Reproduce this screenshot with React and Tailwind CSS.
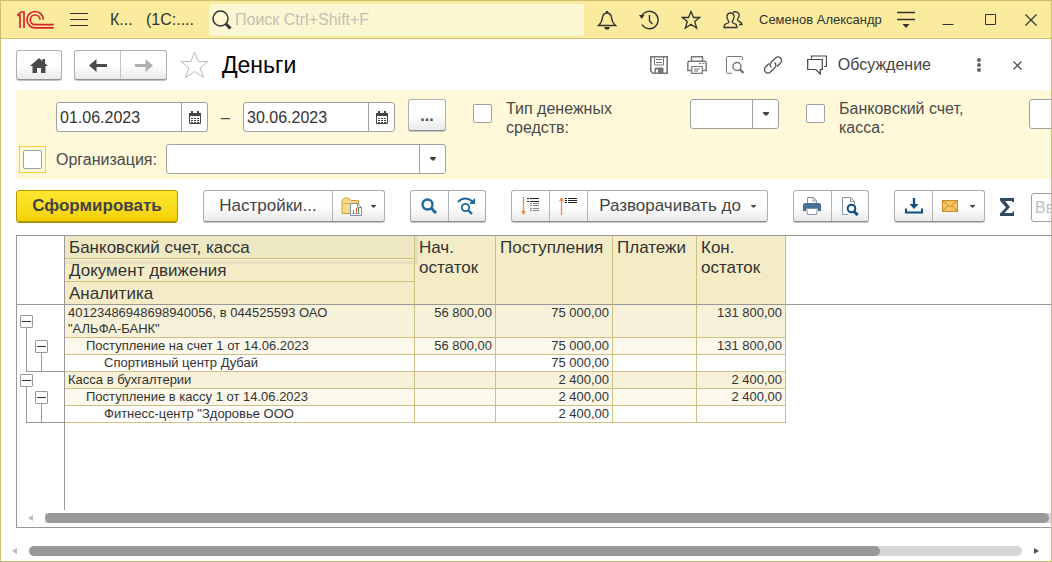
import { clsx } from "clsx";

const rows = [
  {
    level: 0,
    title: '40123486948698940056, в 044525593 ОАО "АЛЬФА-БАНК"',
    values: ["56 800,00", "75 000,00", "", "131 800,00"],
  },
  {
    level: 1,
    title: "Поступление на счет 1 от 14.06.2023",
    values: ["56 800,00", "75 000,00", "", "131 800,00"],
  },
  {
    level: 2,
    title: "Спортивный центр Дубай",
    values: ["", "75 000,00", "", ""],
  },
  {
    level: 0,
    title: "Касса в бухгалтерии",
    values: ["", "2 400,00", "", "2 400,00"],
  },
  {
    level: 1,
    title: "Поступление в кассу 1 от 14.06.2023",
    values: ["", "2 400,00", "", "2 400,00"],
  },
  {
    level: 2,
    title: 'Фитнесс-центр "Здоровье ООО',
    values: ["", "2 400,00", "", ""],
  },
];

const levelColors = ["bg-[#f7f1da]", "bg-[#fcf9ec]", "bg-white"];
const levelIndents = ["pl-[3px]", "pl-[21px]", "pl-[39px]"];

const buttonLook =
  "border border-[#b0b0b0] border-b-[#8f8f8f] rounded-[3px] bg-gradient-to-b from-white from-50% to-[#e9e9e9] shadow-[0_1px_0_#c4c4c4]";

function Svg({ w, h, children, className }) {
  return (
    <svg
      width={w}
      height={h}
      viewBox={`0 0 ${w} ${h}`}
      fill="none"
      stroke="currentColor"
      className={clsx("shrink-0", className)}
      aria-hidden="true"
    >
      {children}
    </svg>
  );
}

function Caret() {
  return (
    <Svg w={6} h={4}>
      <path d="M0 0h6v1L4 3.500H2L0 1z" fill="#444" stroke="none" />
    </Svg>
  );
}

function SmallCaret() {
  return (
    <Svg w={5} h={3}>
      <path d="M0 0h5v.5L2.500 3L0 .5z" fill="#444" stroke="none" />
    </Svg>
  );
}

function Logo() {
  return (
    <svg
      width="37"
      height="19"
      viewBox="0 0 111 57"
      fill="none"
      stroke="#d9232b"
      strokeWidth="5"
      className="shrink-0"
      role="img"
      aria-label="1С"
    >
      <path d="M1 16h8v38M1 16L12 6h9v48" />
      <path d="M79 29A24.500 24.500 0 1 0 55 53.500H110" />
      <path d="M69 29A14.500 14.500 0 1 0 55 44H110" />
    </svg>
  );
}

function TitleButton({ label, children, className = "w-[42px]" }) {
  return (
    <button
      type="button"
      aria-label={label}
      className={clsx("flex h-full shrink-0 items-center justify-center", className)}
    >
      {children}
    </button>
  );
}

function TitleBar() {
  return (
    <header className="flex h-[38px] shrink-0 items-center border-b border-[#cdbd6c] bg-[#faeb9e] text-[#333]">
      <div className="flex w-[208px] shrink-0 items-center pl-4">
        <Logo />
        <button type="button" aria-label="Главное меню" className="ml-4">
          <Svg w={18} h={15}>
            <path d="M0 1.500h18M0 7.500h18M0 13.500h18" />
          </Svg>
        </button>
        <span className="ml-[22px] w-9 text-[16px]">К...</span>
        <span className="text-[16px]">(1С:....</span>
      </div>

      <label className="flex h-8 min-w-0 flex-1 items-center rounded-[3px] bg-[#fdf6d2] pl-[3px]">
        <Svg w={20} h={20}>
          <circle cx="8.500" cy="8.500" r="7.500" strokeWidth="1.500" />
          <path d="M14 14l4.500 4.500" strokeWidth="3" />
        </Svg>
        <input
          type="text"
          aria-label="Поиск"
          placeholder="Поиск Ctrl+Shift+F"
          className="ml-[3px] min-w-0 flex-1 bg-transparent text-[16px] outline-none placeholder:text-[#c3c0b6]"
        />
      </label>

      <nav className="ml-[2px] flex h-full shrink-0 items-center">
        <TitleButton label="Уведомления">
          <Svg w={20} h={20}>
            <path
              d="M1.500 15.500h17c-3-2.500-3.500-4-4-8C14 4.500 12.500 3 10 3S6 4.500 5.500 7.500c-.5 4-1 5.500-4 8z"
              strokeWidth="1.400"
            />
            <path d="M10 1v2" strokeWidth="2" />
            <path d="M7 17h6l-1.500 2.500h-3z" fill="currentColor" stroke="none" />
          </Svg>
        </TitleButton>
        <TitleButton label="История">
          <Svg w={20} h={20}>
            <path d="M2.500 6.500A8.700 8.700 0 1 1 3 14.500" strokeWidth="1.400" />
            <path d="M0 5h5.500L2.700 9z" fill="currentColor" stroke="none" />
            <path d="M10.500 5v6l3 3" strokeWidth="1.400" />
          </Svg>
        </TitleButton>
        <TitleButton label="Избранное">
          <Svg w={20} h={20}>
            <path
              d="M10 1.500l2.500 6h6.200l-5 4 2 6.700-5.700-4-5.700 4 2-6.700-5-4h6.200z"
              strokeWidth="1.300"
            />
          </Svg>
        </TitleButton>
        <TitleButton label="Пользователи">
          <Svg w={20} h={18}>
            <path
              d="M1 16.500c0-3 1-3.500 4-4.500 1-.5 1-1.500.3-2.300C4 8 3.700 6.500 4 5c.3-2 1.500-3 3.500-3s3.200 1 3.500 3c.3 1.500 0 3-1.300 4.700-.7.800-.7 1.800.3 2.300 3 1 4 1.500 4 4.500z"
              strokeWidth="1.300"
            />
            <path
              d="M10 1.500c1-1 4.500-1.200 5.700 1 .8 1.500.3 3.500-.7 5-.8 1.200-.7 2 .3 2.500 2.500 1 3.700 1.500 3.700 3.500h-3"
              strokeWidth="1.300"
            />
          </Svg>
        </TitleButton>
        <button type="button" className="w-[131px] pl-[5px] text-left text-[13px] whitespace-nowrap">
          Семенов Александр
        </button>
        <TitleButton label="Сервис и настройки">
          <Svg w={18} h={17}>
            <path d="M0 1.500h18M0 8.500h18" strokeWidth="1.300" />
            <path d="M5.500 13h7L9 17z" fill="currentColor" stroke="none" />
          </Svg>
        </TitleButton>
        <TitleButton label="Свернуть">
          <Svg w={12} h={12}>
            <path d="M0.500 10.500h11" />
          </Svg>
        </TitleButton>
        <TitleButton label="Развернуть">
          <Svg w={11} h={11}>
            <path d="M0.500 0.500h10v10h-10z" />
          </Svg>
        </TitleButton>
        <TitleButton label="Закрыть" className="w-10">
          <Svg w={12} h={12}>
            <path d="M0.500 0.500l11 11M11.500 0.500l-11 11" strokeWidth="1.200" />
          </Svg>
        </TitleButton>
      </nav>
    </header>
  );
}

function PageHead() {
  return (
    <div className="mt-2.5 flex h-8 shrink-0 items-center pl-[15px] text-[#4a4a4a]">
      <button
        type="button"
        aria-label="Домой"
        className={clsx(buttonLook, "flex h-[30px] w-[46px] items-center justify-center")}
      >
        <Svg w={18} h={15}>
          <path
            d="M9 0L0 8h2.500v7H7v-5h4v5h4.500V8H18l-3-2.700V1h-2.500v2z"
            fill="currentColor"
            stroke="none"
          />
        </Svg>
      </button>
      <div className={clsx(buttonLook, "ml-3 flex h-[30px] w-[93px]")}>
        <button
          type="button"
          aria-label="Назад"
          className="flex flex-1 items-center justify-center border-r border-[#c4c4c4]"
        >
          <Svg w={18} h={13}>
            <path d="M0 6.500L7.500 0v5H18v3H7.500v5z" fill="currentColor" stroke="none" />
          </Svg>
        </button>
        <button
          type="button"
          aria-label="Вперед"
          className="flex flex-1 items-center justify-center text-[#b0b0b0]"
        >
          <Svg w={18} h={13}>
            <path d="M18 6.500L10.500 0v5H0v3h10.500v5z" fill="currentColor" stroke="none" />
          </Svg>
        </button>
      </div>
      <button type="button" aria-label="В избранное" className="ml-3 text-[#b3bcc6]">
        <Svg w={31} h={28}>
          <path d="M15.500 1l3.600 9.500h10l-8 6.300 3.300 9.700-8.900-6-8.900 6 3.300-9.700-8-6.300h10z" />
        </Svg>
      </button>
      <h1 className="ml-3 flex-1 text-[23px] leading-7 text-black">Деньги</h1>

      <div className="flex shrink-0 items-center text-[#777]">
        <button type="button" aria-label="Сохранить">
          <Svg w={18} h={18}>
            <path d="M.8.8h16.400v16.400H3L.8 15z" strokeWidth="1.600" />
            <path d="M4.500 1v8h9V1M6 3.500h6M6 6.500h6" />
            <path d="M5 12h8v5H5z" fill="currentColor" />
            <path d="M7 13.500v3" stroke="white" strokeWidth="2" />
          </Svg>
        </button>
        <button type="button" aria-label="Печать" className="ml-[19px]">
          <Svg w={20} h={18}>
            <path
              d="M4.500 5V.7h11V5M4.500 14.500H.8V7c0-1 .7-1.700 1.700-1.700h15c1 0 1.700.7 1.700 1.700v7.500h-3.700"
              strokeWidth="1.400"
            />
            <path d="M4.700 10.500h10.600v6.800H4.700zM7 13h6M7 15h4M12 7.500h2M15.500 7.500h2" strokeWidth="1.200" />
          </Svg>
        </button>
        <button type="button" aria-label="Предварительный просмотр" className="ml-[19px]">
          <Svg w={18} h={18}>
            <path d="M6 17.300H1.500a1 1 0 0 1-1-1V1.500a1 1 0 0 1 1-1h14a1 1 0 0 1 1 1V4" />
            <circle cx="11" cy="10.500" r="4" strokeWidth="1.500" />
            <path d="M14 13.500l3.500 3.500" strokeWidth="2.400" />
          </Svg>
        </button>
        <button type="button" aria-label="Получить ссылку" className="ml-[19px] text-[#555]">
          <Svg w={20} h={20}>
            <path
              d="M8.500 12.500c-1.700-1.700-1.500-4 0-5.500l4-4c1.500-1.500 3.700-1.500 5 0s1.300 3.500 0 5L14 11.500M11.500 7.500c1.700 1.700 1.500 4 0 5.500l-4 4c-1.500 1.500-3.700 1.500-5 0s-1.300-3.500 0-5L6 8.500"
              strokeWidth="1.300"
            />
          </Svg>
        </button>
        <button
          type="button"
          className="ml-6 flex items-center gap-[11px] text-[16px] text-[#444]"
        >
          <Svg w={20} h={20}>
            <path d="M4.500 3.500V1h15v10.500h-2.500" strokeWidth="1.200" />
            <path d="M.7 4.500h14.600v10h-2V19l-4.500-4.500H.7z" strokeWidth="1.200" />
          </Svg>
          Обсуждение
        </button>
        <button
          type="button"
          aria-label="Ещё"
          className="ml-10 flex w-4 justify-center text-[#666]"
        >
          <Svg w={4} h={14}>
            <circle cx="2" cy="2" r="2" fill="currentColor" stroke="none" />
            <circle cx="2" cy="7" r="2" fill="currentColor" stroke="none" />
            <circle cx="2" cy="12" r="2" fill="currentColor" stroke="none" />
          </Svg>
        </button>
        <button type="button" aria-label="Закрыть страницу" className="mr-[29px] ml-[26px] text-[#555]">
          <Svg w={9} h={9}>
            <path d="M.5.500l8 8M8.500.500l-8 8" strokeWidth="1.400" />
          </Svg>
        </button>
      </div>
    </div>
  );
}

function DateField({ label, value }) {
  return (
    <div className="flex h-[30px] w-[152px] shrink-0 rounded-[3px] border border-[#a0a0a0] bg-white">
      <input
        type="text"
        aria-label={label}
        defaultValue={value}
        className="w-[125px] min-w-0 border-r border-[#a0a0a0] pl-[3px] text-[16px] text-[#333] outline-none"
      />
      <button
        type="button"
        aria-label="Выбрать дату"
        className="flex flex-1 items-center justify-center text-[#444]"
      >
        <Svg w={12} h={13}>
          <path d="M.5 3.500h11v9H.5z" />
          <path d="M0 2h12v3H0zM2 0h2v2H2zM8 0h2v2H8z" fill="currentColor" stroke="none" />
          <path d="M2 7.500h8M2 9.500h8M2 11.500h8" strokeDasharray="2 1" />
        </Svg>
      </button>
    </div>
  );
}

function ComboField({ label, className }) {
  return (
    <div
      className={clsx(
        "flex h-[30px] shrink-0 rounded-[3px] border border-[#a0a0a0] bg-white",
        className
      )}
    >
      <input type="text" aria-label={label} className="min-w-0 flex-1 outline-none" />
      <button
        type="button"
        aria-label="Открыть список"
        className="flex w-[26px] items-center justify-center border-l border-[#a0a0a0]"
      >
        <Caret />
      </button>
    </div>
  );
}

function Check({ id }) {
  return (
    <input
      id={id}
      type="checkbox"
      className="size-[19px] shrink-0 appearance-none rounded-[2px] border border-[#a0a0a0] bg-white checked:bg-[#ffdd00]"
    />
  );
}

function Filters() {
  return (
    <section className="mt-[9px] ml-[15px] h-[89px] shrink-0 overflow-hidden bg-[#fff9da] text-[16px] leading-[19px] text-[#4a4a4a]">
      <div className="flex items-start pt-[9px] pl-10">
        <div className="flex shrink-0 items-center pt-[3px]">
          <DateField label="Начало периода" value="01.06.2023" />
          <span className="w-[35px] text-center">–</span>
          <DateField label="Конец периода" value="30.06.2023" />
        </div>
        <button
          type="button"
          className={clsx(buttonLook, "ml-[13px] h-8 w-[38px] shrink-0 font-bold")}
        >
          ...
        </button>
        <div className="ml-[27px] flex shrink-0 pt-[5px]">
          <Check id="cash-type" />
        </div>
        <label htmlFor="cash-type" className="ml-3.5 w-[184px] shrink-0 pr-12">
          Тип денежных средств:
        </label>
        <ComboField label="Тип денежных средств" className="w-[89px]" />
        <div className="ml-[27px] flex shrink-0 pt-[5px]">
          <Check id="account" />
        </div>
        <label htmlFor="account" className="ml-3.5 w-[190px] shrink-0 pr-10">
          Банковский счет, касса:
        </label>
        <ComboField label="Банковский счет, касса" className="w-[280px]" />
      </div>
      <div className="mt-[7px] flex items-center pl-[3px]">
        <span className="flex size-[27px] shrink-0 items-center justify-center border border-[#ffcc33]">
          <Check id="organization" />
        </span>
        <label htmlFor="organization" className="ml-2.5 w-[110px] shrink-0">
          Организация:
        </label>
        <ComboField label="Организация" className="w-[280px]" />
      </div>
    </section>
  );
}

function Group({ children, className }) {
  return (
    <div
      className={clsx(
        buttonLook,
        "flex h-8 shrink-0 divide-x divide-[#b4b4b4]",
        className
      )}
    >
      {children}
    </div>
  );
}

function Tool({ label, children, className }) {
  return (
    <button
      type="button"
      aria-label={label}
      className={clsx("flex items-center justify-center whitespace-nowrap", className)}
    >
      {children}
    </button>
  );
}

function Toolbar() {
  return (
    <div className="mt-[11px] ml-[15px] flex h-[33px] shrink-0 items-start overflow-hidden text-[17px] text-[#444]">
      <button
        type="button"
        className="h-8 w-[162px] shrink-0 rounded-[3px] border border-[#b09a00] bg-gradient-to-b from-[#ffe72e] to-[#f3d200] font-bold shadow-[0_1px_0_#a89300]"
      >
        Сформировать
      </button>

      <Group className="ml-[25px]">
        <Tool className="w-[129px]">Настройки...</Tool>
        <Tool label="Варианты отчета" className="w-[51px] gap-2">
          <Svg w={22} h={20}>
            <path
              d="M1 17.500V4.500L3.500 2h4L10 4.500h7.500V17.500z"
              fill="#f8d98a"
              stroke="#cf9a36"
            />
            <path d="M2 7.500h15" stroke="#e0b052" />
            <path d="M9.500 7.500h7l4 4v8h-11z" fill="white" stroke="#7d91a6" />
            <path d="M16.500 7.500v4h4" stroke="#7d91a6" />
            <path d="M12.500 17v-3M17.500 17v-5" stroke="#4b9b50" />
            <path d="M15.500 17v-5" stroke="#e04c3c" />
            <path d="M11 17.500h8" stroke="#99a7b5" />
          </Svg>
          <SmallCaret />
        </Tool>
      </Group>

      <Group className="ml-[25px] w-[76px] text-[#1f6ba0]">
        <Tool label="Найти" className="flex-1">
          <Svg w={16} h={16}>
            <circle cx="6.500" cy="6.500" r="5" strokeWidth="2.400" />
            <path d="M10.500 10.500l4.500 4.500" strokeWidth="3" />
          </Svg>
        </Tool>
        <Tool label="Найти далее" className="flex-1">
          <Svg w={20} h={18}>
            <path d="M1 5C5 .5 11 .5 15.500 4.500" strokeWidth="2" />
            <path d="M18 1v6h-6z" fill="currentColor" stroke="none" />
            <circle cx="8.500" cy="10.500" r="3.700" strokeWidth="1.800" />
            <path d="M11.500 13.500l3.500 3.500" strokeWidth="2.400" />
          </Svg>
        </Tool>
      </Group>

      <Group className="ml-[25px] w-[257px]">
        <Tool label="Развернуть группы" className="w-[38px]">
          <Svg w={19} h={18}>
            <path d="M2.500 0v15" stroke="#f58549" strokeWidth="1.300" />
            <path d="M0 14h5l-2.500 4z" fill="#f58549" stroke="none" />
            <path
              d="M6 1.500h2M9 1.500h9M6 4.500h2M9 4.500h9"
              stroke="#222"
            />
            <path
              d="M9 6.500h2M12 6.500h6M9 8.500h2M12 8.500h6M9 11.500h2M12 11.500h6M9 13.500h2M12 13.500h6"
              stroke="#888"
            />
          </Svg>
        </Tool>
        <Tool label="Свернуть группы" className="w-[38px]">
          <Svg w={19} h={18}>
            <path d="M2.500 3v15" stroke="#f58549" strokeWidth="1.300" />
            <path d="M0 4h5L2.500 0z" fill="#f58549" stroke="none" />
            <path
              d="M6 1.500h2M9 1.500h9M6 3.500h2M9 3.500h9M6 5.500h2M9 5.500h9"
              stroke="#222"
            />
          </Svg>
        </Tool>
        <Tool className="flex-1 gap-2.5">
          Разворачивать до
          <SmallCaret />
        </Tool>
      </Group>

      <Group className="ml-[25px] w-[76px]">
        <Tool label="Печать отчета" className="flex-1">
          <Svg w={18} h={18}>
            <path d="M4.500 7V.5h6l3 3V7" fill="white" stroke="#7d91a6" />
            <path d="M10 .5v3.500h3.500" stroke="#7d91a6" />
            <path
              d="M1.500 6h15L18 7.500V14h-3v-3H3v3H0V7.500z"
              fill="#476f9a"
              stroke="none"
            />
            <path d="M3.500 11.500h11l-1 6h-9z" fill="white" stroke="#7d91a6" />
          </Svg>
        </Tool>
        <Tool label="Просмотр" className="flex-1">
          <Svg w={18} h={19}>
            <path d="M7 17.500H1.500V.5h8l4 4V7" stroke="#8798a9" fill="white" />
            <path d="M9.500.5v4h4" stroke="#8798a9" />
            <circle cx="10.500" cy="11.500" r="3.800" stroke="#0b4f82" strokeWidth="2" />
            <path d="M13 14.500l3.700 3.500" stroke="#0b4f82" strokeWidth="3" />
          </Svg>
        </Tool>
      </Group>

      <Group className="ml-[25px] w-[91px]">
        <Tool label="Сохранить отчет" className="w-[38px] text-[#0b4f82]">
          <Svg w={18} h={16}>
            <path d="M9 0v7" strokeWidth="2.400" />
            <path d="M4.500 6h9L9 11z" fill="currentColor" stroke="none" />
            <path d="M1 10.500V14.500h16V10.500" strokeWidth="2" />
          </Svg>
        </Tool>
        <Tool label="Отправить" className="flex-1 gap-3">
          <Svg w={16} h={12}>
            <path d="M.5.500h15v11H.5z" fill="#f5c566" stroke="#c98a25" />
            <path d="M.5.500L8 7l7.500-6.500M.5 11.500L6 5.500M15.500 11.500L10 5.500" stroke="#c98a25" />
          </Svg>
          <SmallCaret />
        </Tool>
      </Group>

      <button type="button" aria-label="Сумма" className="ml-[15px] pt-2 text-[#34495e]">
        <Svg w={14} h={18}>
          <path
            d="M0 0h14v4h-1.500L11.500 3H5l5 6-5.500 6H12l1-1.500h1V18H0v-2.500L6 9.500 0 2.500z"
            fill="currentColor"
            stroke="none"
          />
        </Svg>
      </button>
      <input
        type="text"
        aria-label="Поиск по отчету"
        placeholder="Введите слово для фильтра"
        className="mt-[3px] ml-[17px] h-[29px] w-[230px] shrink-0 rounded-[3px] border border-[#a0a0a0] pl-[3px] text-[16px] outline-none placeholder:text-[#c0c0c0]"
      />
    </div>
  );
}

function Collapse() {
  return (
    <button
      type="button"
      aria-label="Свернуть группу"
      className="flex size-[13px] shrink-0 items-center justify-center rounded-[1px] border border-[#999] bg-white"
    >
      <span className="h-px w-[9px] bg-[#333]" />
    </button>
  );
}

function Tree({ first }) {
  return (
    <div className={clsx("flex flex-col", first ? "h-[67px]" : "h-[51px]")}>
      <div className="flex min-h-0 flex-1 gap-0.5 pl-[3px]">
        <div className={clsx("flex flex-col items-center", first ? "pt-2.5" : "pt-0.5")}>
          <Collapse />
          <span className="w-px flex-1 bg-[#999]" />
        </div>
        <div className={clsx("flex flex-col items-center", first ? "pt-[35px]" : "pt-[19px]")}>
          <Collapse />
          <span className="w-px flex-1 bg-[#999]" />
        </div>
      </div>
      <div className="ml-[9px] h-px bg-[#999]" />
    </div>
  );
}

function Report() {
  const headCell =
    "border-r border-b border-r-[#cdc082] border-b-[#999] bg-[#f4ecc7] px-1 pt-0.5 text-left align-top font-normal";
  const titleCell =
    "h-[23px] border-r border-b border-r-[#cdc082] px-1 pt-0.5 text-left font-normal";

  return (
    <table className="w-full table-fixed border-separate border-spacing-0 text-[#333]">
      <colgroup>
        <col className="w-12" />
        <col className="w-[350px]" />
        <col className="w-[81px]" />
        <col className="w-[117px]" />
        <col className="w-[84px]" />
        <col className="w-[89px]" />
        <col />
      </colgroup>
      <thead className="text-[17px] leading-5">
        <tr>
          <td rowSpan={3} className="border-r border-b border-[#999]" />
          <th className={clsx(titleCell, "relative z-10 border-b-[#cdc082] bg-[#eee7c3]")}>
            Банковский счет, касса
            <span className="absolute top-0 -right-1 -bottom-1.5 left-0 border-r-3 border-b-3 border-[#999]/15" />
          </th>
          <th rowSpan={3} className={headCell}>Нач. остаток</th>
          <th rowSpan={3} className={headCell}>Поступления</th>
          <th rowSpan={3} className={headCell}>Платежи</th>
          <th rowSpan={3} className={headCell}>Кон. остаток</th>
          <td rowSpan={3} className="border-b border-[#999]" />
        </tr>
        <tr>
          <th className={clsx(titleCell, "border-b-[#cdc082] bg-[#f4ecc7]")}>
            Документ движения
          </th>
        </tr>
        <tr>
          <th className={clsx(titleCell, "border-b-[#999] bg-[#f4ecc7]")}>Аналитика</th>
        </tr>
      </thead>
      <tbody className="text-[13px] leading-4">
        {rows.map((row, index) => (
          <tr key={row.title} className="align-top">
            {row.level === 0 && (
              <td rowSpan={3} className="border-r border-[#999]">
                <Tree first={index === 0} />
              </td>
            )}
            <td
              className={clsx(
                "border-r border-b border-[#cdc082] pr-20",
                row.level > 0 && "whitespace-nowrap",
                levelColors[row.level],
                levelIndents[row.level]
              )}
            >
              {row.title}
            </td>
            {row.values.map((value, i) => (
              <td
                key={i}
                className={clsx(
                  "border-r border-b border-[#cdc082] pr-[3px] text-right whitespace-nowrap",
                  levelColors[row.level]
                )}
              >
                {value}
              </td>
            ))}
          </tr>
        ))}
        <tr>
          <td className="h-[87px] border-r border-[#999]" />
        </tr>
      </tbody>
    </table>
  );
}

function Arrow({ right }) {
  return (
    <Svg w={5} h={6}>
      <path
        d={right ? "M0 0l5 3-5 3z" : "M5 0L0 3l5 3z"}
        fill={right ? "#555" : "#bbb"}
        stroke="none"
      />
    </Svg>
  );
}

export default function App() {
  return (
    <div className="flex h-screen flex-col overflow-hidden border border-[#cdbd6c] bg-white font-['Liberation_Sans',Arial,sans-serif]">
      <TitleBar />
      <PageHead />
      <Filters />
      <Toolbar />

      <main className="mt-3 ml-[15px] flex min-h-0 flex-1 flex-col justify-between overflow-hidden border-t border-b border-l border-[#999]">
        <Report />
        <div className="mb-1 flex shrink-0 items-center gap-3 pl-[11px]">
          <Arrow />
          <div className="h-2.5 flex-1 bg-[#d6d6d6]">
            <div className="mr-0.5 h-2.5 rounded-full bg-[#999]" />
          </div>
        </div>
      </main>

      <footer className="flex h-[33px] shrink-0 items-center gap-3 pt-3.5 pr-3 pb-px pl-[11px]">
        <Arrow />
        <div className="h-2.5 flex-1 rounded-full bg-[#d6d6d6]">
          <div className="h-2.5 w-6/7 rounded-full bg-[#999]" />
        </div>
        <Arrow right />
      </footer>
    </div>
  );
}
